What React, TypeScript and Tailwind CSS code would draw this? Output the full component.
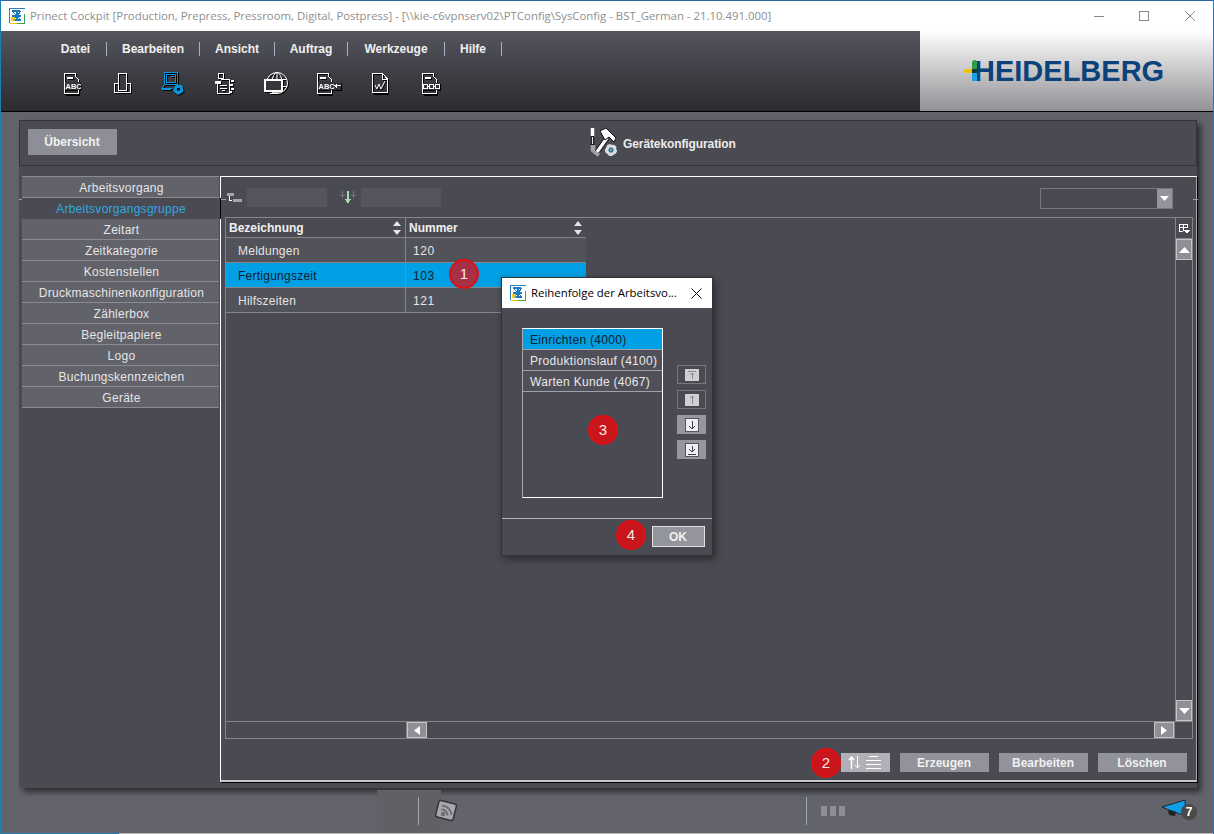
import type { ReactNode } from "react";

const menu = [
  { label: "Datei", w: "w-[62px]" },
  { label: "Bearbeiten", w: "w-[93px]" },
  { label: "Ansicht", w: "w-[75px]" },
  { label: "Auftrag", w: "w-[73px]" },
  { label: "Werkzeuge", w: "w-[97px]" },
  { label: "Hilfe", w: "w-[57px]" },
];

const tabs = [
  "Arbeitsvorgang",
  "Arbeitsvorgangsgruppe",
  "Zeitart",
  "Zeitkategorie",
  "Kostenstellen",
  "Druckmaschinenkonfiguration",
  "Zählerbox",
  "Begleitpapiere",
  "Logo",
  "Buchungskennzeichen",
  "Geräte",
];

const rows = [
  { name: "Meldungen", nr: "120" },
  { name: "Fertigungszeit", nr: "103", selected: true },
  { name: "Hilfszeiten", nr: "121" },
];

const steps = [
  { name: "Einrichten (4000)", selected: true },
  { name: "Produktionslauf (4100)" },
  { name: "Warten Kunde (4067)" },
];

function Badge({ n, className }: { n: number; className: string }) {
  return (
    <div
      className={`absolute flex h-[30px] w-[30px] items-center justify-center rounded-full border-2 border-[#e01015] text-[15px] text-[#f4e8e8] ${className}`}
    >
      {n}
    </div>
  );
}

function AppIcon() {
  return (
    <svg width="16" height="16" viewBox="0 0 16 16" shapeRendering="crispEdges">
      <rect width="16" height="16" fill="#fff" />
      <path d="M0.5 15V.5H15.5" fill="none" stroke="#2c7fb8" />
      <path d="M.5 15.5H8" stroke="#f2c200" />
      <path d="M8 15.5H15.5V6" fill="none" stroke="#3aa655" />
      <path d="M3 3h8M3 3l9 9M12 3L4 12M8 3v9M3 8h9M4 12h8" fill="none" stroke="#1b78c2" strokeWidth="1.2" />
      <rect x="2" y="9" width="4" height="4" fill="#f2c200" opacity=".8" />
    </svg>
  );
}

function Gear({ x, y, r, color }: { x: number; y: number; r: number; color: string }) {
  return (
    <g shapeRendering="auto">
      <circle cx={x} cy={y} r={r} fill="none" stroke={color} strokeWidth={r * 0.9} />
      <circle cx={x} cy={y} r={r * 1.35} fill="none" stroke={color} strokeWidth={r * 0.5} strokeDasharray={`${r * 0.95} ${r * 0.75}`} />
    </g>
  );
}

function DocBase({ children, w = 17 }: { children?: ReactNode; w?: number }) {
  return (
    <>
      <path d={`M1.5 .5H12.5V3.5L${w - 2} 6V20.5H1.5Z`} fill="none" stroke="#fff" />
      <path d="M4 4.5H10" stroke="#fff" strokeWidth="2" />
      <path d="M2 21.5H16" stroke="#000" />
      {children}
    </>
  );
}

const iconText = "font-['Liberation_Sans',sans-serif] font-bold";

function IconAbc() {
  return (
    <svg width="18" height="22" viewBox="0 0 18 22" shapeRendering="crispEdges">
      <DocBase />
      <rect x="2" y="9" width="15" height="8" fill="#35353a" />
      <text x="2.5" y="15.5" fontSize="7.5" fill="#fff" className={iconText}>ABC</text>
    </svg>
  );
}

function IconBars() {
  return (
    <svg width="19" height="21" viewBox="0 0 19 21" shapeRendering="crispEdges">
      <path d="M1.5 10.5H5.5V.5H13.5V10.5H17.5V19.5H1.5ZM5.5 10.5V17.5H13.5V10.5" fill="none" stroke="#fff" />
    </svg>
  );
}

function IconComputer() {
  return (
    <svg width="24" height="24" viewBox="0 0 24 24" shapeRendering="crispEdges">
      <path d="M3.5 .5H16.5V12.5H3.5Z" fill="none" stroke="#0a95dc" />
      <path d="M5.5 2.5H14.5V10.5H5.5Z" fill="none" stroke="#0a95dc" />
      <path d="M10 4.5H13" stroke="#0a95dc" />
      <path d="M3 13.5L1 16.5H11M1 17.5H10" fill="none" stroke="#0a95dc" />
      <Gear x={17.5} y={17.5} r={3.2} color="#0a95dc" />
    </svg>
  );
}

function IconMachine() {
  return (
    <svg width="21" height="22" viewBox="0 0 21 22" shapeRendering="crispEdges">
      <path d="M4.5 .5H9.5V5.5H4.5Z" fill="none" stroke="#fff" />
      <path d="M1 7.5H7V10.5H1Z" fill="#fff" />
      <path d="M3.5 10.5V20.5H15.5V6.5H7" fill="none" stroke="#fff" />
      <path d="M6 12.5H13M6 15.5H13M8 17.5H11" stroke="#fff" />
      <path d="M17 7.5H20M16 11.5H19M17 15.5H20M16 18.5H18" stroke="#fff" strokeWidth="2" />
    </svg>
  );
}

function IconGlobe() {
  return (
    <svg width="24" height="23" viewBox="0 0 24 23">
      <circle cx="13" cy="11" r="10.5" fill="none" stroke="#fff" />
      <ellipse cx="13" cy="11" rx="5" ry="10.5" fill="none" stroke="#fff" />
      <path d="M3 7.5H23M3 14.5H23M13 .5V21" stroke="#fff" />
      <g shapeRendering="crispEdges">
        <rect x="1" y="8" width="17" height="11" fill="#35353a" stroke="#fff" strokeWidth="2" />
        <path d="M6 21.5H13" stroke="#fff" strokeWidth="1.5" />
      </g>
    </svg>
  );
}

function IconAbcArrow() {
  return (
    <svg width="25" height="22" viewBox="0 0 25 22" shapeRendering="crispEdges">
      <DocBase />
      <rect x="2" y="9" width="23" height="8" fill="#33333a" />
      <text x="2.5" y="15.5" fontSize="7.5" fill="#fff" className={iconText}>ABC</text>
      <path d="M18 12.5H25M20.5 10.5V14.5M19.5 11.5V13.5" stroke="#fff" />
    </svg>
  );
}

function IconWave() {
  return (
    <svg width="17" height="21" viewBox="0 0 17 21" shapeRendering="crispEdges">
      <path d="M.5 .5H10.5L15.5 6V19.5H.5Z" fill="none" stroke="#fff" />
      <path d="M10.5 1V6H15" fill="none" stroke="#fff" />
      <path d="M3 12L5 16L7 11L9 16L13 8" fill="none" stroke="#fff" shapeRendering="auto" />
      <path d="M1 20.5H16" stroke="#000" />
    </svg>
  );
}

function IconChain() {
  return (
    <svg width="19" height="22" viewBox="0 0 19 22" shapeRendering="crispEdges">
      <DocBase />
      <rect x="2" y="10" width="17" height="7" fill="#33333a" />
      <path d="M2.5 11.5H6.5V15.5H2.5ZM8.5 11.5H12.5V15.5H8.5ZM14.5 11.5H18.5V15.5H14.5ZM6.5 13.5H8.5M12.5 13.5H14.5" fill="none" stroke="#fff" />
    </svg>
  );
}

const tools = [
  { icon: <IconAbc />, w: "w-[50px]" },
  { icon: <IconBars />, w: "w-[50px]" },
  { icon: <IconComputer />, w: "w-[52px]" },
  { icon: <IconMachine />, w: "w-[51px]" },
  { icon: <IconGlobe />, w: "w-[51px]" },
  { icon: <IconAbcArrow />, w: "w-[54px]" },
  { icon: <IconWave />, w: "w-[50px]" },
  { icon: <IconChain />, w: "w-[50px]" },
];

function HammerIcon() {
  return (
    <svg width="32" height="31" viewBox="0 0 32 31">
      <path d="M4.5 1V10" stroke="#fff" strokeWidth="3.5" />
      <path d="M4.5 9V18" stroke="#111" strokeWidth="3.5" />
      <path d="M4.5 10V17" stroke="#e8e8e8" strokeWidth="1.2" />
      <path d="M5 18V23L11 28" fill="none" stroke="#a2a2a8" strokeWidth="4.5" />
      <path d="M9 25L19 11" stroke="#111" strokeWidth="5" />
      <path d="M9 25L19 11" stroke="#fff" strokeWidth="3.2" />
      <path d="M12 4L18 1L28 11L26 15L21 10L17 13Z" fill="#fff" stroke="#111" strokeWidth="1" />
      <Gear x={23} y={23} r={3.8} color="#d8dde2" />
      <circle cx="23" cy="23" r="2.2" fill="#4aa8d8" stroke="#222" strokeWidth=".6" />
    </svg>
  );
}

function Logo() {
  return (
    <div className="flex items-center">
      <div className="relative h-[22px] w-[10px]">
        <div className="absolute left-0 top-[9px] h-[4px] w-[12px] rounded-l-full bg-[#f4c300]" />
        <div className="absolute left-[8px] top-0 h-[10px] w-[5px] rounded-t-sm bg-[#2f9e44]" />
        <div className="absolute left-[8px] top-[13px] h-[8px] w-[5px] bg-[#19a3e6]" />
        <div className="absolute left-[8px] top-[9px] h-[4px] w-[5px] bg-[#123a34]" />
      </div>
      <span className="text-[29px] font-bold leading-none text-[#0a4279]">HEIDELBERG</span>
    </div>
  );
}

function SortArrows() {
  return (
    <svg width="8" height="14" viewBox="0 0 8 14" className="shrink-0">
      <path d="M4 0L8 5H0Z" fill="#e4e4e8" />
      <path d="M4 14L0 9H8Z" fill="#e4e4e8" />
    </svg>
  );
}

function ArrowBtn({ d, enabled }: { d: string; enabled?: boolean }) {
  return (
    <div
      className={`flex h-[19px] w-[29px] items-center justify-center ${
        enabled ? "bg-[#96969c]" : "border border-[#77777e]"
      }`}
    >
      <svg width="14" height={enabled ? 14 : 12} viewBox={enabled ? "0 0 14 14" : "0 1 14 12"} shapeRendering="crispEdges">
        <rect
          x={enabled ? 0.5 : 0}
          y={enabled ? 0.5 : 1}
          width={enabled ? 13 : 14}
          height={enabled ? 13 : 12}
          fill={enabled ? "#eceef4" : "#d0d0d4"}
          stroke={enabled ? "#55555d" : "none"}
        />
        <path d={d} fill="none" stroke={enabled ? "#3f3f47" : "#8a8a90"} />
      </svg>
    </div>
  );
}

function ScrollBtn({ children, className }: { children: ReactNode; className: string }) {
  return (
    <div className={`flex items-center justify-center border border-[#c4c4c8] bg-[#8f8f96] ${className}`}>
      {children}
    </div>
  );
}

function ActionBtn({ label }: { label: string }) {
  return (
    <div className="flex h-[19px] w-[89px] items-center justify-center bg-[#92929a] pr-px text-[12px] font-bold text-[#f0f0f0]">
      {label}
    </div>
  );
}

export default function App() {
  return (
    <div className="relative flex h-[834px] w-[1214px] flex-col overflow-hidden border-x border-t border-x-[#1c7fb5] border-t-[#2a6aa4] bg-[#63636b] [font-family:'Liberation_Sans',Arial,sans-serif]">
      {/* title bar */}
      <div className="flex h-[30px] shrink-0 items-center bg-white pl-[8px] pr-[18px]">
        <AppIcon />
        <span className="ml-[5px] whitespace-nowrap text-[11.4px] text-[#8f8f8f] [font-family:'Open_Sans',sans-serif]">
          {"Prinect Cockpit [Production, Prepress, Pressroom, Digital, Postpress] - [\\\\kie-c6vpnserv02\\PTConfig\\SysConfig - BST_German - 21.10.491.000]"}
        </span>
        <div className="ml-auto flex items-center gap-[35px]">
          <div className="h-px w-[10px] bg-[#8a8a8a]" />
          <div className="h-[10px] w-[10px] border border-[#8a8a8a]" />
          <svg width="10" height="10" viewBox="0 0 10 10" className="ml-px">
            <path d="M0 0L10 10M10 0L0 10" stroke="#8a8a8a" />
          </svg>
        </div>
      </div>

      {/* header */}
      <div className="flex h-[81px] shrink-0 border-b border-black">
        <div className="w-[919px] bg-gradient-to-b from-[#54555e] to-[#2c2c30] pl-[44px]">
          <div className="flex h-[35px] items-center">
            {menu.map((m) => (
              <div
                key={m.label}
                className={`flex h-[14px] items-center justify-center border-r border-[#a8b0c8] text-[12px] font-bold text-[#f0f0f0] ${m.w}`}
              >
                {m.label}
              </div>
            ))}
          </div>
          <div className="ml-[2px] mt-[5px] flex h-[25px] items-center">
            {tools.map((t, i) => (
              <div
                key={i}
                className={`flex items-center justify-center drop-shadow-[1px_1px_0_#000] ${t.w}`}
              >
                {t.icon}
              </div>
            ))}
          </div>
        </div>
        <div className="flex flex-1 items-center bg-gradient-to-b from-white to-[#929296] pl-[44px]">
          <Logo />
        </div>
      </div>

      {/* panel */}
      <div className="ml-[18px] mt-[8px] flex h-[668px] w-[1178px] shrink-0 flex-col bg-[#4a4a52] shadow-[4px_4px_6px_rgba(0,0,0,0.55)]">
        <div className="flex h-[46px] shrink-0 items-center border border-[#33333a] pb-[2px]">
          <div className="ml-[8px] flex h-[26px] w-[89px] items-center justify-center bg-[#8e8e96] pr-px text-[12px] font-bold text-[#f2f2f2]">
            Übersicht
          </div>
          <div className="ml-[471px] flex items-center">
            <HammerIcon />
            <span className="ml-[3px] mt-[4px] text-[12px] font-bold tracking-[-0.1px] text-[#ececec]">
              Gerätekonfiguration
            </span>
          </div>
        </div>

        <div className="mt-[10px] flex">
          <div className="ml-[3px] w-[197px] shrink-0 border-t border-[#8a8a90] text-[12px] tracking-[0.27px]">
            {tabs.map((t, i) =>
              i === 1 ? (
                <div
                  key={t}
                  className="relative z-10 -mr-[2px] flex h-[21px] items-center justify-center border-r border-black pt-px text-[#2ea8e0]"
                >
                  {t}
                </div>
              ) : (
                <div
                  key={t}
                  className="flex h-[21px] items-center justify-center border-b border-[#8a8a90] bg-[#62626a] pl-[2px] pt-px text-[#e6e6e6]"
                >
                  {t}
                </div>
              ),
            )}
          </div>

          {/* main area */}
          <div className="ml-px flex h-[606px] w-[977px] flex-col border border-b-2 border-white border-b-[#c8c8cc] border-r-[#a8a8ac] pl-[4px] shadow-[1px_1px_0_#000]">
            <div className="flex h-[40px] shrink-0 items-start pt-[11px]">
              <svg width="16" height="11" viewBox="0 0 16 11" className="ml-[2px] mt-[5px]" shapeRendering="crispEdges">
                <rect x="0" y="0" width="7" height="3" fill="#a4a4aa" />
                <path d="M2.5 3V7H5" stroke="#fff" fill="none" />
                <rect x="6" y="6" width="9" height="3" fill="#a4a4aa" />
              </svg>
              <div className="ml-[4px] h-[19px] w-[80px] bg-[#55555d]" />
              <svg width="16" height="16" viewBox="0 0 16 16" className="ml-[13px] mt-[2px]" shapeRendering="crispEdges">
                <path d="M2.5 1V8M13.5 1V8M0 5H5M11 5H16" stroke="#77777e" />
                <path d="M7 1H9V9H11L8 14L5 9H7Z" fill="#a8dcb4" />
              </svg>
              <div className="ml-[5px] h-[19px] w-[80px] bg-[#55555d]" />
              <div className="ml-[599px] flex h-[21px] w-[133px] justify-end border border-[#77777f]">
                <div className="flex w-[15px] items-center justify-center bg-[#94949c]">
                  <svg width="9" height="5" viewBox="0 0 9 5">
                    <path d="M0 0H9L4.5 5Z" fill="#fff" />
                  </svg>
                </div>
              </div>
            </div>

            {/* table box */}
            <div className="flex h-[522px] w-[968px] shrink-0 flex-col border border-[#85858a]">
              <div className="flex min-h-0 flex-1">
                <div className="flex-1">
                  <div className="flex h-[20px] w-[360px] border-b border-[#85858a] text-[12px] font-bold text-[#f0f0f0]">
                    <div className="flex w-[180px] items-center justify-between border-r border-[#85858a] pl-[3px] pr-[4px]">
                      Bezeichnung
                      <SortArrows />
                    </div>
                    <div className="flex flex-1 items-center justify-between pl-[3px] pr-[4px]">
                      Nummer
                      <SortArrows />
                    </div>
                  </div>
                  {rows.map((r) => (
                    <div
                      key={r.name}
                      className={`flex h-[25px] w-[360px] items-center border-b border-[#85858a] text-[12px] tracking-[0.25px] ${
                        r.selected ? "bg-[#019fe3] text-[#0c2030]" : "bg-[#52525a] text-[#e4e4e4]"
                      }`}
                    >
                      <div className="flex h-full w-[180px] items-center border-r border-[#85858a] pl-[12px] pt-px">
                        {r.name}
                      </div>
                      <div className="pl-[7px] pt-px tracking-[0.6px]">{r.nr}</div>
                    </div>
                  ))}
                </div>

                {/* vertical scrollbar */}
                <div className="flex w-[17px] shrink-0 flex-col border-l border-[#85858a]">
                  <div className="flex h-[21px] items-center justify-center border-b border-[#85858a]">
                    <svg width="11" height="11" viewBox="0 0 11 11" shapeRendering="crispEdges">
                      <path d="M.5 1.5H8.5V4.5H.5ZM.5 4.5V8.5H4M4.5 1.5V8" fill="none" stroke="#fff" />
                      <path d="M5 7H11L8 10.5Z" fill="#fff" />
                    </svg>
                  </div>
                  <ScrollBtn className="h-[21px]">
                    <svg width="11" height="6" viewBox="0 0 11 6">
                      <path d="M5.5 0L11 6H0Z" fill="#fff" />
                    </svg>
                  </ScrollBtn>
                  <div className="flex-1" />
                  <ScrollBtn className="h-[21px]">
                    <svg width="11" height="6" viewBox="0 0 11 6">
                      <path d="M0 0H11L5.5 6Z" fill="#fff" />
                    </svg>
                  </ScrollBtn>
                </div>
              </div>

              {/* horizontal scrollbar */}
              <div className="flex h-[17px] shrink-0 border-t border-[#85858a]">
                <div className="w-[181px] border-r border-[#85858a]" />
                <ScrollBtn className="w-[20px]">
                  <svg width="6" height="9" viewBox="0 0 6 9">
                    <path d="M6 0V9L0 4.5Z" fill="#fff" />
                  </svg>
                </ScrollBtn>
                <div className="flex-1" />
                <ScrollBtn className="w-[20px]">
                  <svg width="6" height="9" viewBox="0 0 6 9">
                    <path d="M0 0V9L6 4.5Z" fill="#fff" />
                  </svg>
                </ScrollBtn>
                <div className="w-[18px] border-l border-[#85858a]" />
              </div>
            </div>

            {/* actions */}
            <div className="mt-[14px] flex justify-end gap-[10px] pr-[9px]">
              <div className="flex h-[19px] w-[49px] items-center justify-center gap-[5px] bg-[#b0b0b6] pr-[2px]">
                <svg width="13" height="13" viewBox="0 0 13 13">
                  <path d="M3.5 13V1M1 4L3.5 1L6 4" fill="none" stroke="#fff" strokeWidth="1.5" />
                  <path d="M9.5 0V12M7 9L9.5 12L12 9" fill="none" stroke="#fff" />
                </svg>
                <svg width="15" height="13" viewBox="0 0 15 13" shapeRendering="crispEdges">
                  <path d="M3 .5H12M0 4.5H15M0 8.5H15M0 12.5H15" stroke="#fff" />
                </svg>
              </div>
              <ActionBtn label="Erzeugen" />
              <ActionBtn label="Bearbeiten" />
              <ActionBtn label="Löschen" />
            </div>
          </div>
        </div>
      </div>

      {/* footer */}
      <div className="relative flex h-[45px] shrink-0 items-center">
        <div className="absolute left-[376px] top-[2px] h-[43px] w-[64px] bg-[#606065]" />
        <div className="relative ml-[417px] h-[28px] w-px bg-[#a0a8b8]" />
        <svg width="24" height="23" viewBox="0 0 24 23" className="relative ml-[15px]">
          <rect x="3" y="3" width="18" height="17" rx="2" fill="#a8a8ac" stroke="#33333a" strokeWidth="1.5" transform="rotate(14 12 11.5)" />
          <circle cx="9" cy="15" r="2.2" fill="#6c6c72" />
          <path d="M7.5 10.5A6 6 0 0 1 13.5 16.5M8 6.5A10 10 0 0 1 17.5 16" fill="none" stroke="#6c6c72" strokeWidth="2" />
        </svg>
        <div className="ml-[348px] h-[28px] w-px bg-[#a0a8b8]" />
        <div className="ml-[14px] flex gap-[3px]">
          <div className="h-[10px] w-[6px] bg-[#8e8e94]" />
          <div className="h-[10px] w-[6px] bg-[#8e8e94]" />
          <div className="h-[10px] w-[6px] bg-[#8e8e94]" />
        </div>
        <div className="relative ml-[317px] h-[22px] w-[36px]">
          <svg width="24" height="18" viewBox="0 0 24 18" className="absolute left-0 top-0">
            <path d="M0 7L23 0L24 16L7 10Z" fill="#0f9fe6" stroke="#111" strokeWidth=".8" />
            <path d="M6 10L7 15L13 16L14 12" fill="#222" />
          </svg>
          <div className="absolute left-[19px] top-[4px] flex h-[16px] w-[16px] items-center justify-center rounded-full bg-[#4a4a4a] text-[12px] font-bold text-white">
            7
          </div>
        </div>
      </div>

      {/* window bottom edge */}
      <div className="flex h-px shrink-0">
        <div className="w-[118px] bg-[#1c7fb5]" />
        <div className="flex-1 bg-[#b8b8b8]" />
      </div>

      {/* small tab ticks on the panel */}
      <div className="absolute left-[18px] top-[198px] h-px w-[3px] bg-[#a0a0a6]" />
      <div className="absolute left-[220px] top-[198px] z-10 h-px w-[5px] bg-[#a0a0a6]" />
      <div className="absolute left-[1192px] top-[198px] z-10 h-px w-[5px] bg-[#a0a0a6]" />

      {/* dialog */}
      <div className="absolute left-[500px] top-[276px] z-20 flex h-[279px] w-[212px] flex-col border border-[#33333a] bg-[#4a4a52] shadow-[2px_3px_8px_rgba(0,0,0,0.45)]">
        <div className="flex h-[30px] shrink-0 items-center bg-white pl-[8px] pr-[10px]">
          <AppIcon />
          <span className="ml-[5px] whitespace-nowrap text-[11.4px] text-black [font-family:'Open_Sans',sans-serif]">
            Reihenfolge der Arbeitsvo...
          </span>
          <svg width="11" height="11" viewBox="0 0 11 11" className="ml-auto">
            <path d="M.5 .5L10.5 10.5M10.5 .5L.5 10.5" stroke="#111" />
          </svg>
        </div>
        <div className="flex pl-[20px] pt-[20px]">
          <div className="h-[170px] w-[141px] border border-[#a8a8b0] border-b-white border-r-white border-t-white">
            {steps.map((s) => (
              <div
                key={s.name}
                className={`flex h-[21px] items-center border-b border-[#a0a0a8] pl-[7px] pt-px text-[12px] tracking-[0.3px] ${
                  s.selected ? "bg-[#019fe3] text-[#0c2030]" : "bg-[#50505a] text-[#e8e8e8]"
                }`}
              >
                {s.name}
              </div>
            ))}
          </div>
          <div className="ml-[14px] flex flex-col gap-[6px] pt-[37px]">
            <ArrowBtn d="M3 3.5H11M7 11V5M4.5 7.5L7 5L9.5 7.5" />
            <ArrowBtn d="M7 11V3M4.5 5.5L7 3L9.5 5.5" />
            <ArrowBtn enabled d="M7 3V11M4.5 8.5L7 11L9.5 8.5" />
            <ArrowBtn enabled d="M3 11.5H11M7 3V9M4.5 6.5L7 9L9.5 6.5" />
          </div>
        </div>
        <div className="mt-[20px] border-t border-[#b4b4bc]" />
        <div className="flex justify-end pr-[7px] pt-[7px]">
          <div className="flex h-[21px] w-[53px] items-center justify-center border border-[#e0e0e0] bg-[#94949c] pr-px text-[12px] font-bold text-[#f0f0f0]">
            OK
          </div>
        </div>
      </div>

      {/* callouts */}
      <Badge n={1} className="left-[448px] top-[258px] z-10 bg-[#a83045]" />
      <Badge n={2} className="left-[810px] top-[747px] z-10 bg-[#c8161c]" />
      <Badge n={3} className="left-[587px] top-[414px] z-30 bg-[#c8161c]" />
      <Badge n={4} className="left-[615px] top-[519px] z-30 bg-[#c8161c]" />
    </div>
  );
}
